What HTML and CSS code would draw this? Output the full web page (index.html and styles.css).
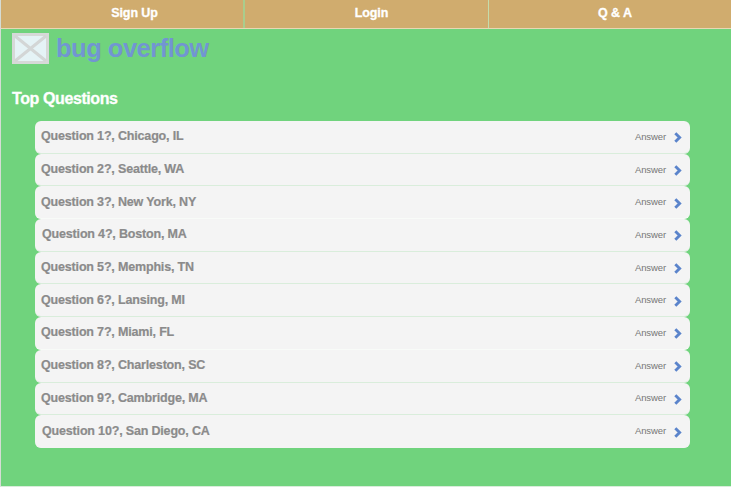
FILE: index.html
```html
<!DOCTYPE html>
<html lang="en">
<head>
<meta charset="utf-8">
<title>bug overflow</title>
<link rel="stylesheet" href="styles.css">
</head>
<body>
<svg class="symbols" aria-hidden="true"><symbol id="chevron" viewBox="0 0 8 11"><path d="M1.3 1.3 5.6 5.5 1.3 9.7" fill="none" stroke="#5b84cb" stroke-width="2.9"/></symbol></svg>
<nav class="nav"><a>Sign Up</a><a>Login</a><a>Q &amp; A</a></nav>
<main>
<header class="brand">
<svg class="logo" viewBox="0 0 37 31"><rect width="37" height="31" fill="#d6d9d8"/><rect x="3" y="3" width="31" height="25" fill="#e5f3f6"/><path d="M3 3 34 28M34 3 3 28" stroke="#d3d6d6" stroke-width="3"/></svg>
<h1>bug overflow</h1>
</header>
<h2>Top Questions</h2>
<ul class="questions">
<li><b>Question 1?, Chicago, IL</b><span>Answer</span><svg><use href="#chevron"/></svg></li>
<li><b>Question 2?, Seattle, WA</b><span>Answer</span><svg><use href="#chevron"/></svg></li>
<li><b>Question 3?, New York, NY</b><span>Answer</span><svg><use href="#chevron"/></svg></li>
<li><b>Question 4?, Boston, MA</b><span>Answer</span><svg><use href="#chevron"/></svg></li>
<li><b>Question 5?, Memphis, TN</b><span>Answer</span><svg><use href="#chevron"/></svg></li>
<li><b>Question 6?, Lansing, MI</b><span>Answer</span><svg><use href="#chevron"/></svg></li>
<li><b>Question 7?, Miami, FL</b><span>Answer</span><svg><use href="#chevron"/></svg></li>
<li><b>Question 8?, Charleston, SC</b><span>Answer</span><svg><use href="#chevron"/></svg></li>
<li><b>Question 9?, Cambridge, MA</b><span>Answer</span><svg><use href="#chevron"/></svg></li>
<li><b>Question 10?, San Diego, CA</b><span>Answer</span><svg><use href="#chevron"/></svg></li>
</ul>
</main>
</body>
</html>
```
FILE: styles.css
```css
* { box-sizing: border-box; }
body {
  margin: 0;
  height: 487px;
  overflow: hidden;
  background: #70d37d;
  border-left: 1px solid #d5dcd5;
  border-bottom: 1px solid #d9ecdb;
  font-family: "Liberation Sans", Arial, sans-serif;
}
.symbols { display: none; }
.nav {
  display: grid;
  grid-template-columns: 244px 244px 1fr;
  height: 29px;
  background: #d0ac6e;
  border-bottom: 1px solid #e6d8b5;
}
.nav a {
  padding-left: 10px;
  border-right: 1px solid #c5dcab;
  color: #fff;
  font-size: 12.5px;
  font-weight: bold;
  line-height: 26px;
  letter-spacing: -0.1px;
  text-align: center;
  -webkit-text-stroke: 0.3px #fff;
}
.nav a:first-child {
  padding-left: 25px;
  border-right: 2px solid #a9cd8d;
}
.nav a:last-child { border-right: 0; }
main { padding: 4px 41px 0 11px; }
.brand { display: flex; height: 31px; }
.logo { width: 37px; height: 31px; }
h1 {
  margin: 0 0 0 7px;
  color: #7295d2;
  font-size: 25.5px;
  line-height: 30px;
  letter-spacing: -0.5px;
}
h2 {
  margin: 25px 0 0;
  color: #fff;
  font-size: 16px;
  line-height: 20px;
  letter-spacing: -0.4px;
  -webkit-text-stroke: 0.3px #fff;
}
.questions {
  margin: 12px 0 0 23px;
  padding: 0;
  list-style: none;
}
.questions li {
  display: flex;
  align-items: center;
  height: 32.7px;
  padding: 0 8px 1px 6px;
  background: #f4f4f4;
  border-bottom: 1px solid #d9eddb;
  border-radius: 6px;
}
.questions li:nth-child(4n + 3) { border-bottom-color: #f8fbf8; }
.questions li:last-child { border-bottom-color: #f4f4f4; }
.questions li:nth-child(4), .questions li:last-child { padding-left: 7px; }
.questions b {
  flex: 1;
  color: #8b8b8b;
  font-size: 12.5px;
  letter-spacing: -0.17px;
  -webkit-text-stroke: 0.2px #8b8b8b;
}
.questions span {
  color: #777;
  font-size: 9.5px;
  letter-spacing: -0.1px;
}
.questions svg {
  width: 8px;
  height: 11px;
  margin: 3px 0 0 8px;
}
```
